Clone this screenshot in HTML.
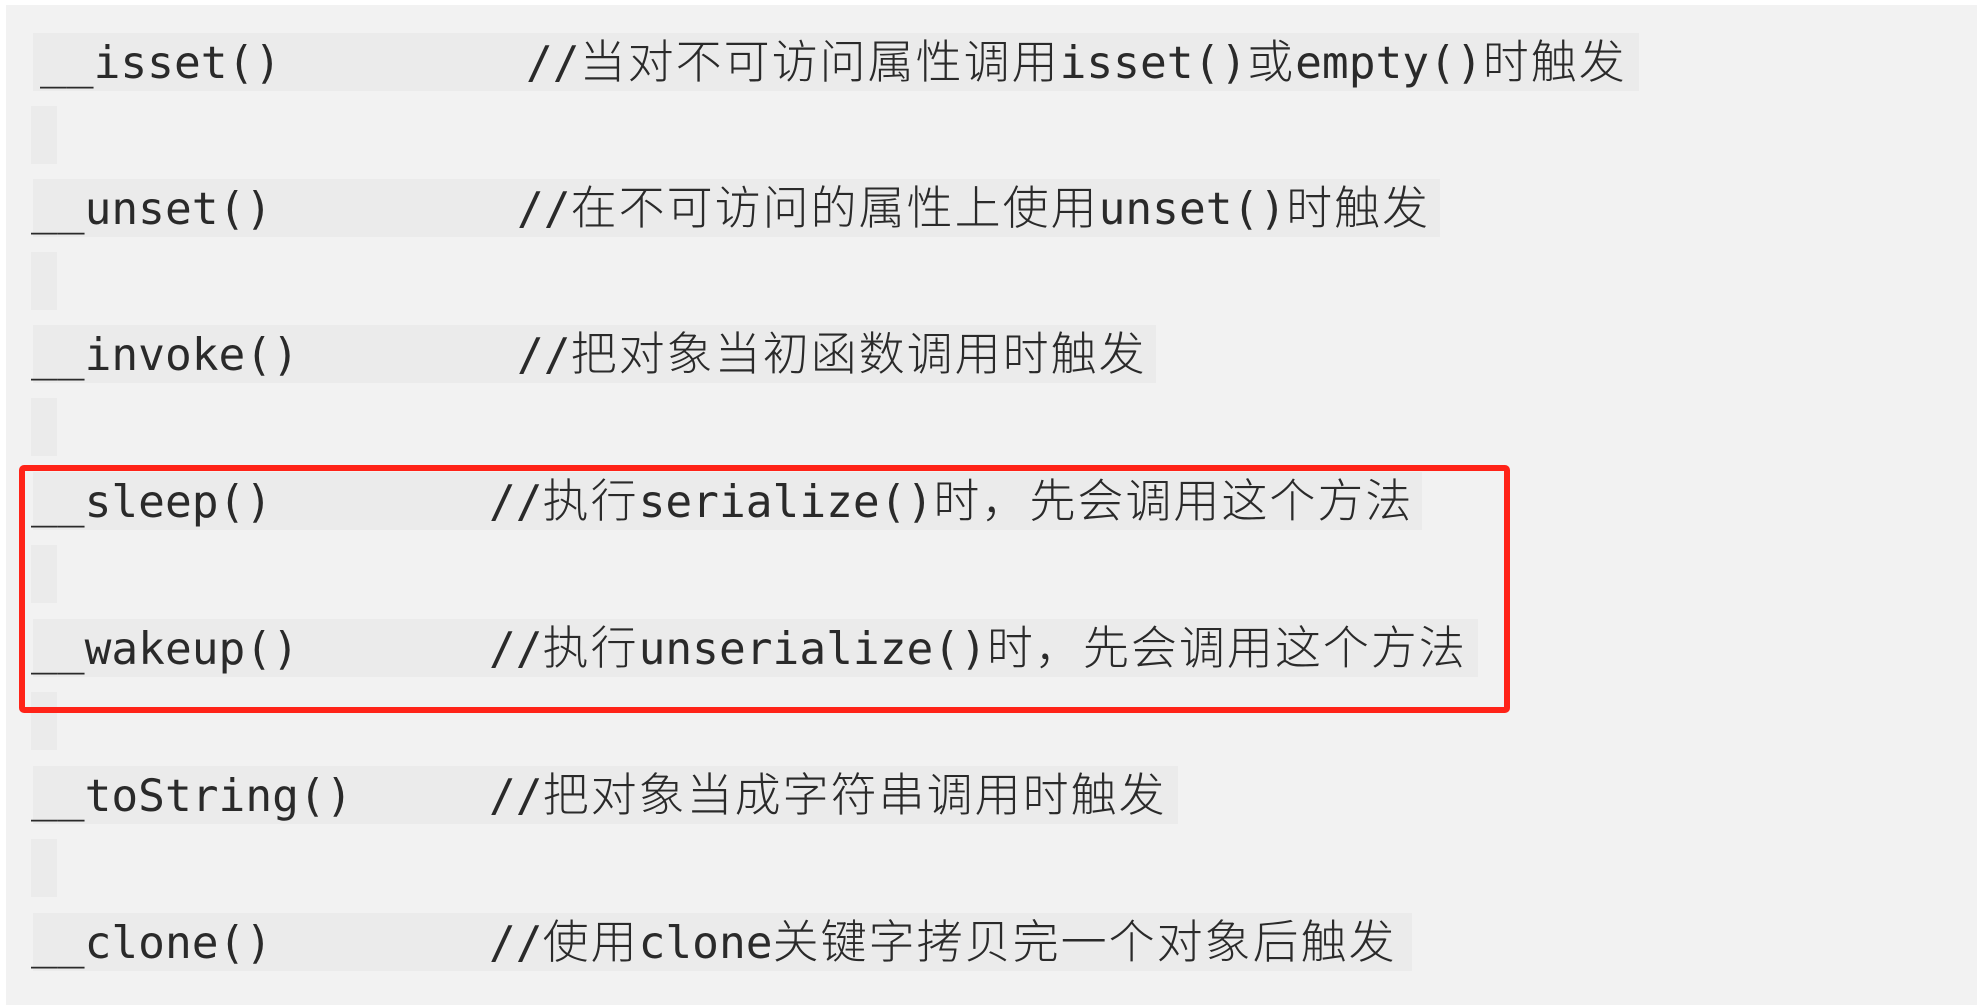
<!DOCTYPE html>
<html><head><meta charset="utf-8">
<style>
html,body{margin:0;padding:0;}
body{width:1977px;height:1005px;background:#fff;position:relative;overflow:hidden;}
#bg{position:absolute;left:6px;top:5px;right:0;bottom:0;background:#f2f2f2;}
.band{position:absolute;background:#ebebeb;height:58px;}
.blk{position:absolute;left:31px;width:26px;height:58px;background:#ebebeb;}
.t{position:absolute;font-family:"DejaVu Sans Mono","Noto Sans CJK SC",monospace;font-size:44.5px;line-height:62px;height:58px;color:#2a2a2a;white-space:nowrap;}
.t span{font-family:"Noto Sans CJK SC",sans-serif;font-size:46px;letter-spacing:2px;font-weight:300;line-height:0;}
#box{position:absolute;left:19px;top:465px;width:1479px;height:236px;border:6px solid #ff2318;border-radius:5px;}
</style></head><body>
<div id="bg"></div>

<div class="band" style="left:33px;top:33px;width:1606px"></div>
<div class="blk" style="top:106px"></div>
<div class="band" style="left:33px;top:179px;width:1407px"></div>
<div class="blk" style="top:252px"></div>
<div class="band" style="left:33px;top:325px;width:1123px"></div>
<div class="blk" style="top:398px"></div>
<div class="band" style="left:33px;top:472px;width:1389px"></div>
<div class="blk" style="top:545px"></div>
<div class="band" style="left:33px;top:619px;width:1445px"></div>
<div class="blk" style="top:692px"></div>
<div class="band" style="left:33px;top:766px;width:1145px"></div>
<div class="blk" style="top:839px"></div>
<div class="band" style="left:33px;top:913px;width:1379px"></div>

<div class="t" style="left:40px;top:33px">__isset()</div>
<div class="t" style="left:526px;top:33px">//<span>当对不可访问属性调用</span>isset()<span>或</span>empty()<span>时触发</span></div>
<div class="t" style="left:31px;top:179px">__unset()</div>
<div class="t" style="left:517px;top:179px">//<span>在不可访问的属性上使用</span>unset()<span>时触发</span></div>
<div class="t" style="left:31px;top:325px">__invoke()</div>
<div class="t" style="left:517px;top:325px">//<span>把对象当初函数调用时触发</span></div>
<div class="t" style="left:31px;top:472px">__sleep()</div>
<div class="t" style="left:489px;top:472px">//<span>执行</span>serialize()<span>时，先会调用这个方法</span></div>
<div class="t" style="left:31px;top:619px">__wakeup()</div>
<div class="t" style="left:489px;top:619px">//<span>执行</span>unserialize()<span>时，先会调用这个方法</span></div>
<div class="t" style="left:31px;top:766px">__toString()</div>
<div class="t" style="left:489px;top:766px">//<span>把对象当成字符串调用时触发</span></div>
<div class="t" style="left:31px;top:913px">__clone()</div>
<div class="t" style="left:489px;top:913px">//<span>使用</span>clone<span>关键字拷贝完一个对象后触发</span></div>

<div id="box"></div>
</body></html>
